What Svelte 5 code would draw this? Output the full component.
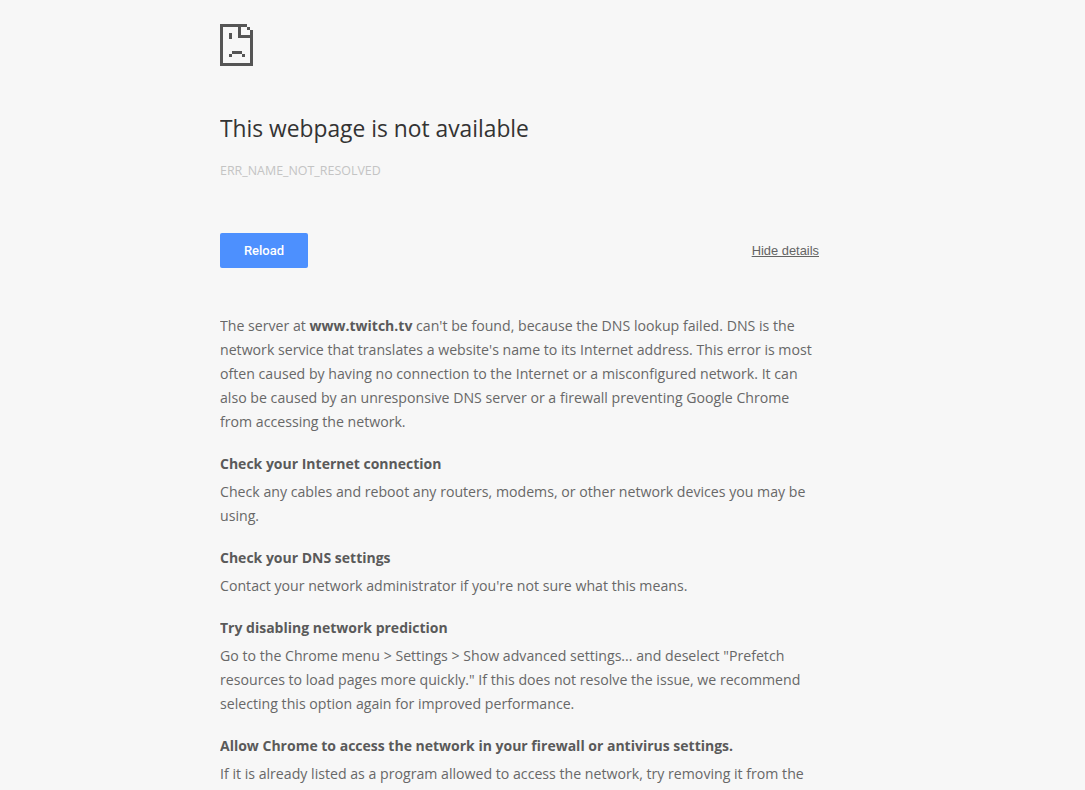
<script>
	const title = 'This webpage is not available';
</script>

<div class="page">
	<svg class="icon" width="33" height="42" viewBox="0 0 33 42" shape-rendering="crispEdges" aria-hidden="true">
		<path fill="#555" fill-rule="evenodd" d="M0 0h27v3h3v3h3v36H0zM3 3v36h27V14H18V3zM21 3v8h9V6h-3V3z" />
		<path fill="#555" d="M9 9h3v6H9zM12 27h10v3H12zM9 30h3v3H9zM22 30h3v3h-3z" />
	</svg>
	<h1>{title}</h1>
	<p class="code">ERR_NAME_NOT_RESOLVED</p>
	<div class="actions">
		<button type="button" class="reload">Reload</button>
		<span class="details">Hide details</span>
	</div>
	<section class="body">
		<p>The server at <strong>www.twitch.tv</strong> can't be found, because the DNS lookup failed. DNS is the network service that translates a website's name to its Internet address. This error is most often caused by having no connection to the Internet or a misconfigured network. It can also be caused by an unresponsive DNS server or a firewall preventing Google Chrome from accessing the network.</p>
		<h2>Check your Internet connection</h2>
		<p>Check any cables and reboot any routers, modems, or other network devices you may be using.</p>
		<h2>Check your DNS settings</h2>
		<p>Contact your network administrator if you're not sure what this means.</p>
		<h2>Try disabling network prediction</h2>
		<p>Go to the Chrome menu &gt; Settings &gt; Show advanced settings... and deselect "Prefetch resources to load pages more quickly." If this does not resolve the issue, we recommend selecting this option again for improved performance.</p>
		<h2>Allow Chrome to access the network in your firewall or antivirus settings.</h2>
		<p>If it is already listed as a program allowed to access the network, try removing it from the</p>
	</section>
</div>

<style>
	:global(body) {
		background: #f7f7f7;
		overflow: hidden;
	}

	.page {
		width: 600px;
		height: 790px;
		overflow: hidden;
		margin-left: 220px;
		padding-top: 24px;
		box-sizing: border-box;
		font-family: 'Open Sans', 'Noto Sans', sans-serif;
		font-size: 14.15px;
		line-height: 24px;
		color: #686868;
	}

	.icon {
		display: block;
	}

	h1 {
		margin: 47px 0 0;
		font-size: 22.8px;
		font-weight: 400;
		line-height: 32px;
		color: #333;
	}

	.code {
		margin: 14px 0 0;
		font-size: 12.45px;
		line-height: 24px;
		color: #c4c4c4;
	}

	.actions {
		display: flex;
		align-items: center;
		justify-content: space-between;
		margin-top: 50px;
		padding-right: 1px;
	}

	.reload {
		width: 88px;
		height: 35px;
		padding: 0;
		border: 0;
		border-radius: 2px;
		background: #4d90fe;
		color: #fff;
		font: 500 13px Roboto, sans-serif;
	}

	.details {
		font-family: 'Liberation Sans', sans-serif;
		font-size: 12.9px;
		color: #646464;
		text-decoration: underline;
	}

	.body {
		margin-top: 46px;
	}

	.body p {
		margin: 0;
	}

	.body h2 {
		margin: 18px 0 4px;
		font-size: 14px;
		line-height: 24px;
		font-weight: 700;
		color: #5a5a5a;
	}

	strong {
		font-size: 14px;
		font-weight: 700;
		color: #5a5a5a;
	}
</style>
